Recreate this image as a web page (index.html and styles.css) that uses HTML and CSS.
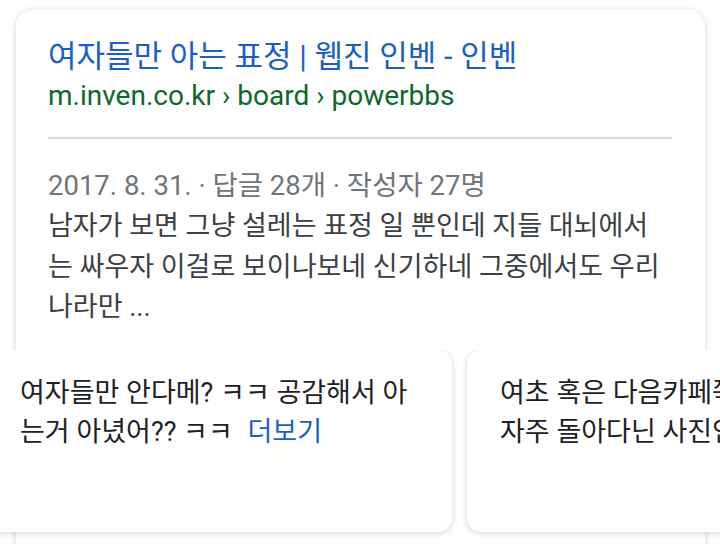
FILE: index.html
```html
<!DOCTYPE html>
<html lang="ko">
<head>
    <meta charset="UTF-8" />
    <meta name="viewport" content="width=device-width, initial-scale=1.0"/>
    <title>여자들만 아는 표정 | 웹진 인벤 - 인벤</title>
    <link rel="stylesheet" href="styles.css">
</head>
<body>
<div class="result">
    <div class="result-head">
        <a class="result-title" href="#">여자들만 아는 표정 | 웹진 인벤 - 인벤</a>
        <div class="result-url">m.inven.co.kr › board › powerbbs</div>
    </div>

    <div class="result-body">
        <div class="meta">2017. 8. 31. · 답글 28개 · 작성자 27명</div>
        <p class="snippet">남자가 보면 그냥 설레는 표정 일 뿐인데 지들 대뇌에서 는 싸우자 이걸로 보이나보네 신기하네 그중에서도 우리 나라만 ...</p>
    </div>

    <div class="carousel">
        <div class="reply">
            <p>여자들만 안다메? ㅋㅋ 공감해서 아 는거 아녔어?? ㅋㅋ <a class="more" href="#">더보기</a></p>
        </div>
        <div class="reply">
            <p>여초 혹은 다음카페쪽에서<br>자주 돌아다닌 사진인데</p>
        </div>
    </div>
</div>
</body>
</html>
```

FILE: styles.css
```css
:root {
    --link: #1a5fc6;
    --url: #0b6a2b;
    --text: #202124;
    --text-light: #70757a;
    --border: #dadce0;
}

body {
    font-family: Roboto, "Noto Sans CJK KR", sans-serif;
    margin: 0;
    padding: 0;
    background-color: #fff;
    color: var(--text);
    overflow: hidden;
}

.result {
    margin: 10px 15px 0 16px;
    padding: 0 33px 40px 32px;
    background: #fff;
    border-radius: 16px;
    box-shadow: 0 1px 6px rgba(32, 33, 36, 0.2);
}

.result-head {
    padding: 27px 0 22px;
    border-bottom: 2px solid var(--border);
}

.result-title {
    display: block;
    font-size: 31px;
    line-height: 40px;
    color: var(--link);
    text-decoration: none;
}

.result-url {
    font-size: 28px;
    line-height: 38px;
    color: var(--url);
}

.result-body {
    padding-top: 27px;
}

.meta {
    font-size: 27.5px;
    line-height: 40px;
    color: var(--text-light);
}

.snippet {
    margin: 0;
    font-size: 27px;
    line-height: 40.5px;
    color: #3c4043;
    word-break: keep-all;
}

.carousel {
    display: flex;
    gap: 15px;
    margin: 22px -60px 0 -61px;
    overflow: hidden;
}

.reply {
    flex: 0 0 465px;
    box-sizing: border-box;
    height: 182px;
    padding: 24px 32px 0 33px;
    margin: 0 0 8px;
    background: #fff;
    border-radius: 14px;
    box-shadow: 0 1px 6px rgba(32, 33, 36, 0.2);
}

.reply p {
    margin: 0;
    font-size: 27px;
    line-height: 39px;
}

.more {
    margin-left: 8px;
    color: var(--link);
    text-decoration: none;
}
```
